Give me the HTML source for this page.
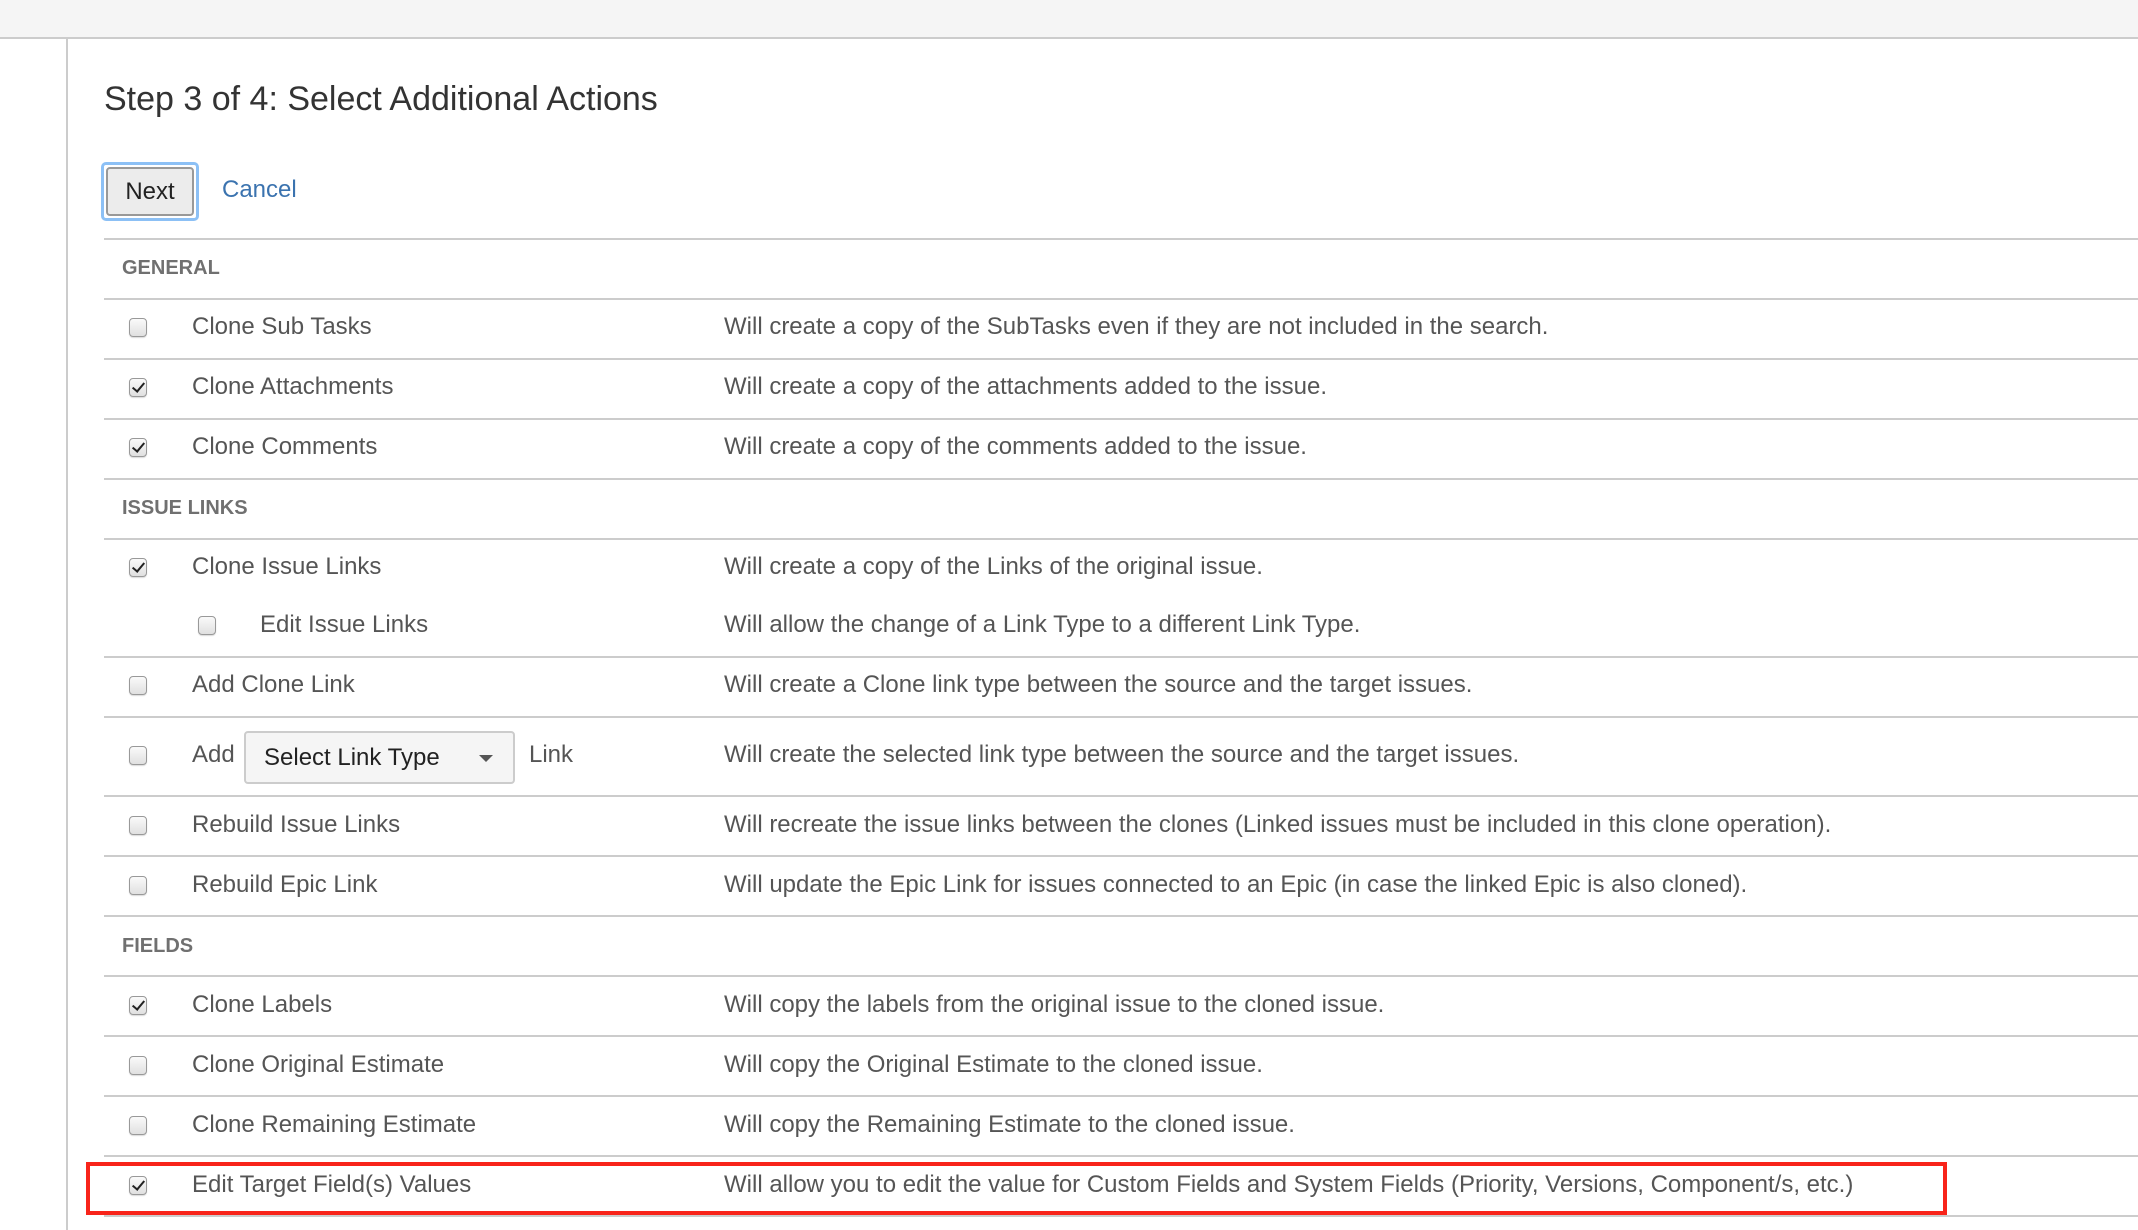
<!DOCTYPE html>
<html><head><meta charset="utf-8"><style>
*{margin:0;padding:0;box-sizing:border-box}
body{width:2138px;height:1230px;background:#fff;position:relative;overflow:hidden;font-family:"Liberation Sans",Arial,sans-serif;color:#555}
.top{position:absolute;left:0;top:0;width:2138px;height:39px;background:#f5f5f5;border-bottom:2px solid #ccc}
.vl{position:absolute;left:66px;top:39px;width:2px;height:1191px;background:#ccc}
h1{position:absolute;left:104px;top:80px;font-size:34px;font-weight:normal;color:#333;white-space:nowrap}
.btn{position:absolute;left:101px;top:162px;width:98px;height:59px;border:3px solid #8cc0f5;border-radius:5px;padding:2px}
.btn div{width:100%;height:100%;background:#ececec;border:2px solid #999;border-radius:4px;font-size:24px;color:#222;display:flex;align-items:center;justify-content:center}
.cancel{position:absolute;left:222px;top:176px;font-size:24px;color:#3b73af}
.ln{position:absolute;left:104px;right:0;height:2px;background:#ccc}
.t{position:absolute;font-size:24px;white-space:nowrap;line-height:30px}
.h{position:absolute;left:122px;font-size:20px;font-weight:bold;color:#707070;line-height:24px}
.cb{position:absolute;width:18px;height:19px;border:1.5px solid #999;border-radius:4px;background:linear-gradient(#fafafa,#e0e0e0);box-shadow:0 1px 1px rgba(0,0,0,.15)}
.cb.on::after{content:"";position:absolute;left:5px;top:1px;width:5px;height:10px;border:solid #222;border-width:0 2.5px 2.5px 0;transform:rotate(40deg)}
.sel{position:absolute;left:244px;top:731px;width:271px;height:53px;border:2px solid #ccc;border-radius:4px;background:#f5f5f5;font-size:24px;color:#222;padding-left:18px;line-height:49px}
.sel::after{content:"";position:absolute;right:20px;top:22px;border-left:7px solid transparent;border-right:7px solid transparent;border-top:7px solid #555}
.red{position:absolute;left:86px;top:1162px;width:1861px;height:53px;border:4px solid #f8241a}
</style></head><body>
<div class="top"></div>
<div class="vl"></div>
<h1>Step 3 of 4: Select Additional Actions</h1>
<div class="btn"><div>Next</div></div>
<div class="cancel">Cancel</div>

<div class="ln" style="top:238px"></div>
<div class="h" style="top:256px">GENERAL</div>
<div class="ln" style="top:298px"></div>
<div class="cb" style="left:129px;top:318px"></div><div class="t" style="left:192px;top:312px">Clone Sub Tasks</div><div class="t" style="left:724px;top:312px">Will create a copy of the SubTasks even if they are not included in the search.</div>
<div class="ln" style="top:358px"></div>
<div class="cb on" style="left:129px;top:378px"></div><div class="t" style="left:192px;top:372px">Clone Attachments</div><div class="t" style="left:724px;top:372px">Will create a copy of the attachments added to the issue.</div>
<div class="ln" style="top:418px"></div>
<div class="cb on" style="left:129px;top:438px"></div><div class="t" style="left:192px;top:432px">Clone Comments</div><div class="t" style="left:724px;top:432px">Will create a copy of the comments added to the issue.</div>
<div class="ln" style="top:478px"></div>
<div class="h" style="top:496px">ISSUE LINKS</div>
<div class="ln" style="top:538px"></div>
<div class="cb on" style="left:129px;top:558px"></div><div class="t" style="left:192px;top:552px">Clone Issue Links</div><div class="t" style="left:724px;top:552px">Will create a copy of the Links of the original issue.</div>
<div class="cb" style="left:198px;top:616px"></div><div class="t" style="left:260px;top:610px">Edit Issue Links</div><div class="t" style="left:724px;top:610px">Will allow the change of a Link Type to a different Link Type.</div>
<div class="ln" style="top:656px"></div>
<div class="cb" style="left:129px;top:676px"></div><div class="t" style="left:192px;top:670px">Add Clone Link</div><div class="t" style="left:724px;top:670px">Will create a Clone link type between the source and the target issues.</div>
<div class="ln" style="top:716px"></div>
<div class="cb" style="left:129px;top:746px"></div><div class="t" style="left:192px;top:740px">Add</div>
<div class="sel">Select Link Type</div>
<div class="t" style="left:529px;top:740px">Link</div><div class="t" style="left:724px;top:740px">Will create the selected link type between the source and the target issues.</div>
<div class="ln" style="top:795px"></div>
<div class="cb" style="left:129px;top:816px"></div><div class="t" style="left:192px;top:810px">Rebuild Issue Links</div><div class="t" style="left:724px;top:810px">Will recreate the issue links between the clones (Linked issues must be included in this clone operation).</div>
<div class="ln" style="top:855px"></div>
<div class="cb" style="left:129px;top:876px"></div><div class="t" style="left:192px;top:870px">Rebuild Epic Link</div><div class="t" style="left:724px;top:870px">Will update the Epic Link for issues connected to an Epic (in case the linked Epic is also cloned).</div>
<div class="ln" style="top:915px"></div>
<div class="h" style="top:934px">FIELDS</div>
<div class="ln" style="top:975px"></div>
<div class="cb on" style="left:129px;top:996px"></div><div class="t" style="left:192px;top:990px">Clone Labels</div><div class="t" style="left:724px;top:990px">Will copy the labels from the original issue to the cloned issue.</div>
<div class="ln" style="top:1035px"></div>
<div class="cb" style="left:129px;top:1056px"></div><div class="t" style="left:192px;top:1050px">Clone Original Estimate</div><div class="t" style="left:724px;top:1050px">Will copy the Original Estimate to the cloned issue.</div>
<div class="ln" style="top:1095px"></div>
<div class="cb" style="left:129px;top:1116px"></div><div class="t" style="left:192px;top:1110px">Clone Remaining Estimate</div><div class="t" style="left:724px;top:1110px">Will copy the Remaining Estimate to the cloned issue.</div>
<div class="ln" style="top:1155px"></div>
<div class="cb on" style="left:129px;top:1176px"></div><div class="t" style="left:192px;top:1170px">Edit Target Field(s) Values</div><div class="t" style="left:724px;top:1170px">Will allow you to edit the value for Custom Fields and System Fields (Priority, Versions, Component/s, etc.)</div>
<div class="ln" style="top:1215px"></div>
<div class="red"></div>
</body></html>
